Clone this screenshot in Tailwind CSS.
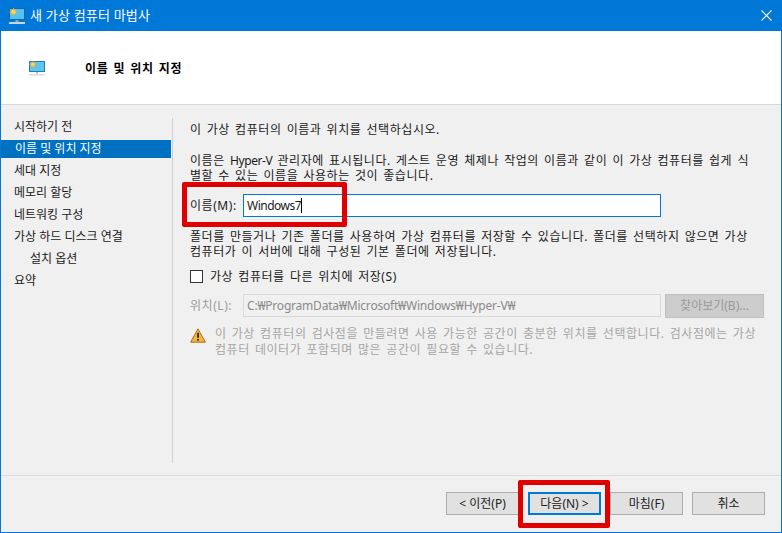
<!DOCTYPE html>
<html lang="ko">
<head>
  <meta charset="UTF-8" />
  <title>새 가상 컴퓨터 마법사</title>
  <script src="https://cdn.jsdelivr.net/npm/@tailwindcss/browser@4"></script>
</head>
<body class="bg-[#f0f0f0] font-['Noto_Sans','Noto_Sans_CJK_KR',sans-serif] text-[12px] text-[#1a1a1a]">
  <div class="relative w-[782px] h-[533px] overflow-hidden flex flex-col border border-[#0078d7] border-t-0">
    <!-- Title bar -->
    <div class="h-[31px] bg-[#0078d7] flex items-center text-white shrink-0 -mx-px">
      <svg class="ml-[9px]" width="17" height="16" viewBox="0 0 17 16">
        <rect x="0.5" y="0.5" width="15" height="11" fill="#4fc3f7" stroke="#1f6496" />
        <path d="M4.5 0V8M0.5 4H8.5M1.7 1.2L7.3 6.8M7.3 1.2L1.7 6.8" stroke="#f7a823" stroke-width="1" />
        <circle cx="4.5" cy="4" r="2.3" fill="#ffd34d" />
        <rect x="6.5" y="12" width="3" height="2" fill="#8fa6b6" />
        <rect x="0" y="14" width="16" height="2" fill="#c9d6df" />
      </svg>
      <span class="ml-[4px] text-[13px] tracking-[0.2px]">새 가상 컴퓨터 마법사</span>
      <svg class="ml-auto mr-[10px]" width="11" height="11" viewBox="0 0 11 11">
        <path d="M0.5 0.5L10.5 10.5M10.5 0.5L0.5 10.5" stroke="#fff" stroke-width="1.1" fill="none" />
      </svg>
    </div>

    <!-- Header -->
    <div class="h-[74px] bg-white border-b border-[#d9d9d9] flex items-center shrink-0">
      <svg class="ml-[28px] mt-[1px]" width="17" height="15" viewBox="0 0 17 15">
        <rect x="0.5" y="0.5" width="15" height="10" fill="#5cc5f2" stroke="#2f7aa8" />
        <path d="M4 0V7M0.5 3.5H7.5M1.5 1L6.5 6M6.5 1L1.5 6" stroke="#f7a823" stroke-width="0.9" />
        <circle cx="4" cy="3.5" r="2" fill="#ffd34d" />
        <rect x="7" y="11" width="2" height="2" fill="#b7c7d3" />
        <rect x="0" y="13" width="16" height="1.5" fill="#d3dee6" />
      </svg>
      <span class="ml-[39px] mt-[2px] font-bold text-black tracking-[0.6px] [word-spacing:1.5px]">이름 및 위치 지정</span>
    </div>

    <!-- Body -->
    <div class="flex-1 flex min-h-0">
      <!-- Steps -->
      <div class="w-[171px] pt-[11px] shrink-0">
        <div class="h-[22px] pl-[13px] flex items-center">시작하기 전</div>
        <div class="h-[18px] mt-[2px] mr-[1px] pl-[14px] flex items-center bg-[#0070c0] text-white">이름 및 위치 지정</div>
        <div class="h-[22px] mt-[2px] pl-[13px] flex items-center">세대 지정</div>
        <div class="h-[22px] pl-[13px] flex items-center">메모리 할당</div>
        <div class="h-[22px] pl-[13px] flex items-center">네트워킹 구성</div>
        <div class="h-[22px] pl-[13px] flex items-center">가상 하드 디스크 연결</div>
        <div class="h-[22px] pl-[29px] flex items-center">설치 옵션</div>
        <div class="h-[22px] pl-[13px] flex items-center">요약</div>
      </div>

      <!-- Main panel -->
      <div class="flex-1 mt-[13px] mb-[12px] border-l border-[#cfcfcf] pl-[17px] pr-[17px] pt-[4px] leading-[15px] tracking-[0.55px] [word-spacing:1.5px]">
        <p class="h-[15px]">이 가상 컴퓨터의 이름과 위치를 선택하십시오.</p>
        <p class="mt-[16px] h-[30px]">이름은 <span class="tracking-[-0.4px]">Hyper-V</span> 관리자에 표시됩니다. 게스트 운영 체제나 작업의 이름과 같이 이 가상 컴퓨터를 쉽게 식<br />별할 수 있는 이름을 사용하는 것이 좋습니다.</p>

        <div class="mt-[11px] flex items-center h-[23px]">
          <span class="w-[53px]">이름(M):</span>
          <div class="w-[418px] h-[23px] bg-white border border-[#0078d7] pl-[3px] flex items-center">
            <span class="tracking-[-0.5px]">Windows7</span><span class="w-px h-[15px] bg-black"></span>
          </div>
        </div>

        <p class="mt-[12px] h-[30px]">폴더를 만들거나 기존 폴더를 사용하여 가상 컴퓨터를 저장할 수 있습니다. 폴더를 선택하지 않으면 가상<br />컴퓨터가 이 서버에 대해 구성된 기본 폴더에 저장됩니다.</p>

        <label class="mt-[9px] flex items-center h-[17px]">
          <span class="w-[13px] h-[13px] bg-white border border-[#333]"></span>
          <span class="ml-[7px]">가상 컴퓨터를 다른 위치에 저장(S)</span>
        </label>

        <div class="mt-[9px] flex items-center h-[23px] text-[#9c9c9c]">
          <span class="w-[53px]">위치(L):</span>
          <div class="w-[418px] h-[23px] bg-[#f0f0f0] border border-[#d9d9d9] pl-[3px] flex items-center text-[#8a8a8a] tracking-[-0.2px]">C:₩ProgramData₩Microsoft₩Windows₩Hyper-V₩</div>
          <div class="ml-[4px] w-[99px] h-[24px] bg-[#cccccc] border border-[#bfbfbf] flex items-center justify-center text-[#9a9a9a] tracking-normal">찾아보기(B)...</div>
        </div>

        <div class="mt-[9px] flex text-[#a6a6a6] leading-[16px]">
          <svg class="mt-[2px] shrink-0" width="16" height="15" viewBox="0 0 16 15">
            <path d="M8 0.8L15.4 14.2H0.6Z" fill="#f3b73c" stroke="#a8701a" />
            <rect x="7.2" y="4.8" width="1.7" height="5" fill="#222" />
            <rect x="7.2" y="11" width="1.7" height="1.7" fill="#222" />
          </svg>
          <p class="ml-[9px]">이 가상 컴퓨터의 검사점을 만들려면 사용 가능한 공간이 충분한 위치를 선택합니다. 검사점에는 가상<br />컴퓨터 데이터가 포함되며 많은 공간이 필요할 수 있습니다.</p>
        </div>
      </div>
    </div>

    <!-- Footer -->
    <div class="h-[57px] border-t border-[#dcdcdc] shrink-0 flex justify-end gap-[9px] pt-[16px] pr-[16px] text-[#222]">
      <button class="w-[73px] h-[23px] bg-[#e1e1e1] border border-[#adadad]">&lt; 이전(P)</button>
      <button class="w-[73px] h-[23px] bg-[#e1e1e1] border-2 border-[#0078d7]">다음(N) &gt;</button>
      <button class="w-[73px] h-[23px] bg-[#e1e1e1] border border-[#adadad]">마침(F)</button>
      <button class="w-[73px] h-[23px] bg-[#e1e1e1] border border-[#adadad]">취소</button>
    </div>

    <!-- Red highlight boxes -->
    <div class="absolute left-[181px] top-[182px] w-[165px] h-[45px] border-[5px] border-[#e00000] rounded-[2px]"></div>
    <div class="absolute left-[517px] top-[480px] w-[92px] h-[48px] border-[5px] border-[#e00000] rounded-[2px]"></div>
  </div>
</body>
</html>
